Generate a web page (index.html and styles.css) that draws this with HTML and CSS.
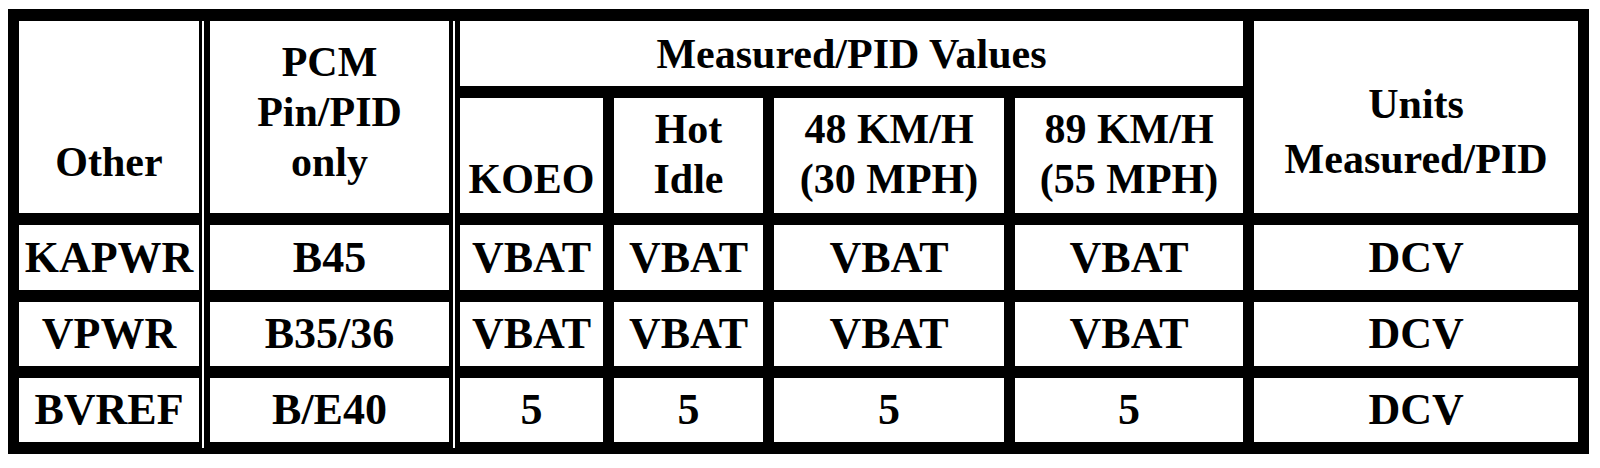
FILE: index.html
```html
<!DOCTYPE html>
<html lang="en">
<head>
    <meta charset="UTF-8">
    <meta name="viewport" content="width=device-width, initial-scale=1.0">
    <title>PCM Pin Values</title>
    <link rel="stylesheet" href="styles.css">
</head>
<body>
    <table class="pid-table">
        <colgroup>
            <col class="col-other">
            <col class="col-pin">
            <col class="col-koeo">
            <col class="col-idle">
            <col class="col-48">
            <col class="col-89">
            <col class="col-units">
        </colgroup>

        <!-- Header -->
        <tr class="head-top">
            <th rowspan="2" class="tall">Other</th>
            <th rowspan="2" class="tall">PCM<br>Pin/PID<br>only</th>
            <th colspan="4" class="group">Measured/PID Values</th>
            <th rowspan="2" class="tall units">Units<br>Measured/PID</th>
        </tr>
        <tr class="head-sub">
            <th>KOEO</th>
            <th>Hot<br>Idle</th>
            <th>48 KM/H<br>(30 MPH)</th>
            <th>89 KM/H<br>(55 MPH)</th>
        </tr>

        <!-- Values -->
        <tr class="row-first">
            <td>KAPWR</td>
            <td>B45</td>
            <td>VBAT</td>
            <td>VBAT</td>
            <td>VBAT</td>
            <td>VBAT</td>
            <td>DCV</td>
        </tr>
        <tr>
            <td>VPWR</td>
            <td>B35/36</td>
            <td>VBAT</td>
            <td>VBAT</td>
            <td>VBAT</td>
            <td>VBAT</td>
            <td>DCV</td>
        </tr>
        <tr>
            <td>BVREF</td>
            <td>B/E40</td>
            <td>5</td>
            <td>5</td>
            <td>5</td>
            <td>5</td>
            <td>DCV</td>
        </tr>
    </table>
</body>
</html>
```

FILE: styles.css
```css
* {
    margin: 0;
    padding: 0;
    box-sizing: border-box;
}

body {
    background-color: #fff;
    font-family: "Liberation Serif", "Times New Roman", serif;
    color: #000;
}

/* black table background shows through the spacing as the rules,
   the two white strips are the hairlines of the double rules */
.pid-table {
    margin: 9px 0 0 8px;
    width: 1581px;
    table-layout: fixed;
    border-collapse: separate;
    border-spacing: 11px 12px;
    background:
        linear-gradient(#fff, #fff) 194px 12px / 2px calc(100% - 18px) no-repeat,
        linear-gradient(#fff, #fff) 445px 12px / 2px calc(100% - 18px) no-repeat,
        #000;
}

.col-other { width: 180px; }
.col-pin { width: 239px; }
.col-koeo { width: 143px; }
.col-idle { width: 149px; }
.col-48 { width: 230px; }
.col-89 { width: 228px; }
.col-units { width: 324px; }

th, td {
    background-color: #fff;
    text-align: center;
    font-weight: bold;
    white-space: nowrap;
}

th {
    font-size: 42px;
    line-height: 50px;
}

.head-top {
    height: 65px;
}

.head-top th.group {
    vertical-align: middle;
}

.head-top th.tall {
    vertical-align: bottom;
    padding-bottom: 26px;
}

.head-top th.units {
    line-height: 55px;
}

.head-sub {
    height: 115px;
}

.head-sub th {
    vertical-align: bottom;
    padding-bottom: 9px;
}

td {
    font-size: 44px;
    line-height: 50px;
    height: 64px;
    vertical-align: middle;
}

.row-first td {
    height: 65px;
}
```
